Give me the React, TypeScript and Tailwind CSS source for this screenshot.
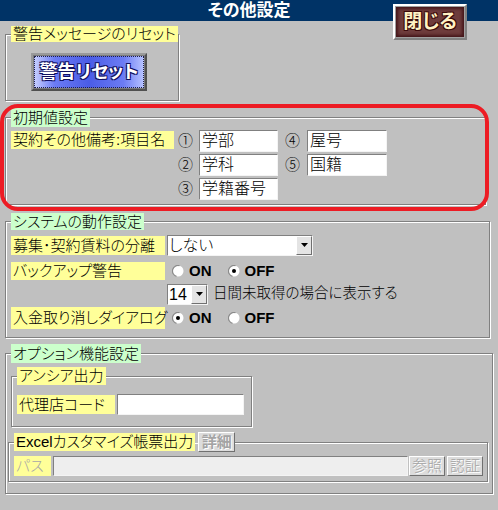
const jp = "font-['Liberation_Sans','Noto_Sans_CJK_JP',sans-serif] [font-feature-settings:'palt'] font-light";
const etched = "border border-[#808080] shadow-[1px_1px_0_#ffffff,inset_1px_1px_0_#ffffff]";
const sunken = "border border-t-[#808080] border-l-[#808080] border-r-[#f4f4f4] border-b-[#f4f4f4]";
const raised = "border border-t-white border-l-white border-r-[#707070] border-b-[#707070]";
const yellow = "bg-[#ffff99]";
const green = "bg-[#ccffcc]";

function Radio({ checked }: { checked?: boolean }) {
  return (
    <svg width="12" height="12" viewBox="0 0 12 12" className="shrink-0">
      <circle cx="6" cy="6" r="5.5" fill="#ffffff" />
      <path d="M7.5 0.7 A5.5 5.5 0 0 0 4.5 11.3" stroke="#8a8a8a" strokeWidth="1.2" fill="none" />
      {checked && <circle cx="6" cy="6" r="2" fill="#000000" />}
    </svg>
  );
}

function RadioPair({ on }: { on: boolean }) {
  return (
    <div className="flex items-center font-['Liberation_Sans',sans-serif] text-[15px] font-bold">
      <Radio checked={on} />
      <span className="ml-[5px]">ON</span>
      <span className="ml-[16px]">
        <Radio checked={!on} />
      </span>
      <span className="ml-[5px]">OFF</span>
    </div>
  );
}

function Select({ value, className }: { value: string; className: string }) {
  return (
    <div className={`flex h-[21px] bg-white ${sunken} ${className}`}>
      <span className="flex-1 pl-[1px] text-[16px] leading-[19px]">{value}</span>
      <span className={`flex w-[16px] items-center justify-center bg-[#e4e4e4] ${raised}`}>
        <svg width="7" height="4" viewBox="0 0 7 4">
          <path d="M0 0 H7 L3.5 4 Z" fill="#000000" />
        </svg>
      </span>
    </div>
  );
}

function TextBox({ value, className }: { value?: string; className: string }) {
  return (
    <div className={`h-[22px] bg-white pl-[2px] text-[16px] leading-[20px] ${sunken} ${className}`}>
      {value}
    </div>
  );
}

function Label({ children, className }: { children: React.ReactNode; className: string }) {
  return <div className={`${yellow} pl-[2px] text-[15px] whitespace-nowrap ${className}`}>{children}</div>;
}

function DisabledButton({ children, className }: { children: React.ReactNode; className: string }) {
  return (
    <div
      className={`flex items-center justify-center bg-[#dcdcdc] text-[15px] text-[#a4a4a4] [text-shadow:1px_1px_0_#ffffff] ${raised} ${className}`}
    >
      {children}
    </div>
  );
}

export default function App() {
  return (
    <div className={`relative h-[510px] w-[498px] bg-[#c0c0c0] text-black ${jp}`}>
      <div className="h-[21px] bg-[#003366] text-center text-[17px] font-bold leading-[21px] text-white">
        その他設定
      </div>

      <div className="absolute left-[393px] top-[4px] h-[36px] w-[74px] border-2 border-t-white border-l-white border-r-[#808080] border-b-[#808080] bg-[#a0a0a0] p-[1px]">
        <div className="flex h-full w-full items-center justify-center bg-[#6e3c3c] text-[19px] font-bold text-[#fff2c4] shadow-[inset_0_0_3px_2px_#45161a] [text-shadow:1px_1px_0_#3a0a0a,-1px_-1px_0_#3a0a0a,1px_-1px_0_#3a0a0a,-1px_1px_0_#3a0a0a]">
          閉じる
        </div>
      </div>

      <div className="flex flex-col items-start pl-[5px] pt-[5px]">
        <fieldset className={`w-[174px] pb-[9px] ${etched}`}>
          <legend className={`ml-[5px] h-[16px] px-[2px] text-[15px] leading-[16px] ${yellow}`}>
            警告メッセージのリセット
          </legend>
          <div className="ml-[25px] mt-[11px] h-[38px] w-[116px] border-2 border-t-[#9a9a9a] border-l-[#9a9a9a] border-r-[#505050] border-b-[#505050] bg-[#7a7a7a] p-[1px]">
            <div className="flex h-full w-full items-center justify-center border border-dotted border-[#20204a] bg-[linear-gradient(90deg,#c4ccff,#6c7cf4_18%,#4a5ce6_50%,#6c7cf4_82%,#b4c0ff)] text-[18px] font-bold text-white [text-shadow:1px_1px_0_#101060,-1px_-1px_0_#101060,1px_-1px_0_#101060,-1px_1px_0_#101060]">
              警告リセット
            </div>
          </div>
        </fieldset>

        <fieldset className={`mt-[7px] w-[481px] pb-[4px] ${etched}`}>
          <legend className={`ml-[5px] h-[19px] px-[2px] text-[15px] leading-[19px] ${green}`}>初期値設定</legend>
          <div className="ml-[5px] mt-[3px] flex">
            <Label className="mt-[1px] h-[18px] w-[163px] leading-[18px]">契約その他備考:項目名</Label>
            <div className="flex flex-col gap-[2px]">
              <div className="flex h-[22px] items-center">
                <span className="w-[25px] pl-[4px] text-[15px]">①</span>
                <TextBox value="学部" className="w-[79px]" />
                <span className="w-[29px] pl-[7px] text-[15px]">④</span>
                <TextBox value="屋号" className="w-[80px]" />
              </div>
              <div className="flex h-[22px] items-center">
                <span className="w-[25px] pl-[4px] text-[15px]">②</span>
                <TextBox value="学科" className="w-[79px]" />
                <span className="w-[29px] pl-[7px] text-[15px]">⑤</span>
                <TextBox value="国籍" className="w-[80px]" />
              </div>
              <div className="flex h-[22px] items-center">
                <span className="w-[25px] pl-[4px] text-[15px]">③</span>
                <TextBox value="学籍番号" className="w-[79px]" />
              </div>
            </div>
          </div>
        </fieldset>

        <fieldset className={`mt-[8px] w-[485px] pb-[7px] ${etched}`}>
          <legend className={`ml-[5px] h-[17px] px-[2px] text-[15px] leading-[17px] ${green}`}>
            システムの動作設定
          </legend>
          <div className="ml-[5px] mt-[4px] flex flex-col">
            <div className="flex h-[22px] items-center">
              <Label className="h-[19px] w-[154px] leading-[19px]">募集･契約賃料の分離</Label>
              <Select value="しない" className="ml-[2px] w-[146px]" />
            </div>
            <div className="mt-[4px] flex h-[22px] items-center">
              <Label className="h-[18px] w-[154px] leading-[18px]">バックアップ警告</Label>
              <div className="ml-[7px]">
                <RadioPair on={false} />
              </div>
            </div>
            <div className="flex h-[24px] items-center">
              <Select value="14" className="ml-[156px] w-[41px]" />
              <span className="ml-[5px] text-[14.5px]">日間未取得の場合に表示する</span>
            </div>
            <div className="flex h-[24px] items-center">
              <Label className="h-[22px] w-[154px] leading-[22px]">入金取り消しダイアログ</Label>
              <div className="ml-[7px]">
                <RadioPair on={true} />
              </div>
            </div>
          </div>
        </fieldset>

        <fieldset className={`mt-[6px] w-[488px] pb-[11px] ${etched}`}>
          <legend className={`ml-[5px] h-[19px] px-[2px] text-[15px] leading-[19px] ${green}`}>
            オプション機能設定
          </legend>
          <fieldset className={`ml-[5px] mt-[4px] w-[241px] pb-[11px] ${etched}`}>
            <legend className={`ml-[5px] h-[18px] px-[2px] text-[15px] leading-[18px] ${yellow}`}>アンシア出力</legend>
            <div className="ml-[5px] mt-[9px] flex h-[21px] items-center">
              <Label className="h-[19px] w-[98px] leading-[19px]">代理店コード</Label>
              <TextBox className="ml-[2px] !h-[21px] w-[127px]" />
            </div>
          </fieldset>
          <fieldset className={`ml-[2px] mt-[5px] w-[480px] pb-[5px] ${etched}`}>
            <legend className="ml-[5px] flex h-[20px] items-center">
              <span className={`h-[18px] px-[2px] text-[15px] leading-[18px] ${yellow}`}>Excelカスタマイズ帳票出力</span>
              <DisabledButton className="ml-[3px] h-[20px] w-[37px] font-bold">詳細</DisabledButton>
            </legend>
            <div className="ml-[5px] mt-[4px] flex h-[20px]">
              <Label className="w-[37px] leading-[20px] text-[#a8a8a8]">パス</Label>
              <div className={`ml-[2px] h-[20px] w-[355px] bg-[#eeeeee] ${sunken}`} />
              <DisabledButton className="ml-[1px] h-[20px] w-[36px]">参照</DisabledButton>
              <DisabledButton className="ml-[2px] h-[20px] w-[36px]">認証</DisabledButton>
            </div>
          </fieldset>
        </fieldset>
      </div>

      <div className="pointer-events-none absolute left-0 top-[104px] h-[107px] w-[489px] rounded-[18px] border-4 border-[#ed1c24]" />
    </div>
  );
}
